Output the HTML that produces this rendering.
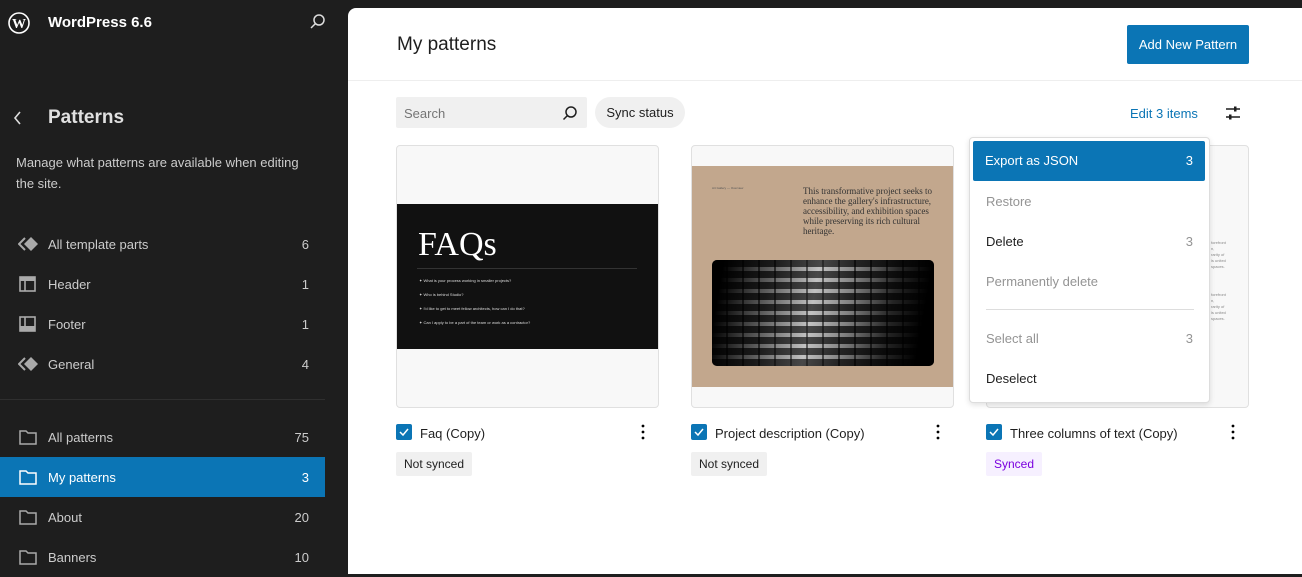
<!DOCTYPE html>
<html><head><meta charset="utf-8"><style>
*{box-sizing:border-box;margin:0;padding:0}
body{width:1302px;height:574px;overflow:hidden;background:#1e1e1e;font-family:"Liberation Sans",sans-serif;position:relative}
.abs{position:absolute}
.sb{color:#ccc;font-size:13px}
.item{position:absolute;left:0;width:325px;height:40px;display:flex;align-items:center;padding-left:18px;color:#ccc;font-size:13px}
.item .ic{width:20px;height:20px;margin-right:10px;display:flex;align-items:center;justify-content:center}
.item .n{position:absolute;right:16px}
.main{position:absolute;left:348px;top:8px;width:954px;height:566px;background:#fff;border-top-left-radius:8px}
.card{position:absolute;top:137px;width:263px;height:263px;border:1px solid #e0e0e0;border-radius:4px;background:#f8f8f8;overflow:hidden}
.cb{position:absolute;top:416px;width:16px;height:16px;background:#0b75b5;border-radius:2px}
.title{position:absolute;top:418px;font-size:13px;color:#1e1e1e}
.dots{position:absolute;top:415px;width:4px;font-size:16px;color:#1e1e1e}
.badge{position:absolute;top:444px;height:24px;padding:0 8px;line-height:24px;font-size:12px;border-radius:2px}
.mi{position:absolute;left:16px;right:4px;height:40px;display:flex;align-items:center;font-size:13px;color:#1e1e1e}
.mi .n{position:absolute;right:12px}
.dis{color:#949494}
</style></head><body>
<svg class="abs" style="left:8px;top:12px" width="22" height="22" viewBox="0 0 22 22"><circle cx="11" cy="11" r="10" fill="none" stroke="#fff" stroke-width="1.6"/><text x="11" y="16" font-size="14" font-family="Liberation Serif" font-weight="bold" fill="#fff" text-anchor="middle">W</text></svg>
<div class="abs" style="left:48px;top:14px;color:#fff;font-size:15px;font-weight:bold">WordPress 6.6</div>
<svg class="abs" style="left:309px;top:13px" width="18" height="18" viewBox="0 0 18 18"><circle cx="10" cy="7" r="5" fill="none" stroke="#ddd" stroke-width="1.5"/><path d="M6.5 10.5L2 15" stroke="#ddd" stroke-width="1.5"/></svg>
<svg class="abs" style="left:12px;top:110px" width="12" height="16" viewBox="0 0 12 16"><path d="M8 2L3 8l5 6" fill="none" stroke="#ddd" stroke-width="1.6"/></svg>
<div class="abs" style="left:48px;top:107px;color:#e0e0e0;font-size:19px;font-weight:bold">Patterns</div>
<div class="abs sb" style="left:16px;top:152px;width:300px;line-height:21px">Manage what patterns are available when editing the site.</div>
<div class="item" style="top:224px"><span class="ic"><svg width="22" height="16"><path d="M7 2L1 8l6 6" fill="none" stroke="#aaa" stroke-width="2"/><path d="M13 1l7 7-7 7-7-7z" fill="#aaa"/></svg></span>All template parts<span class="n">6</span></div>
<div class="item" style="top:264px"><span class="ic"><svg width="18" height="16"><rect x="1" y="1" width="15" height="14" fill="none" stroke="#aaa" stroke-width="1.6"/><rect x="1" y="1" width="15" height="4" fill="#aaa"/><path d="M6 5v10" stroke="#aaa" stroke-width="1.6"/></svg></span>Header<span class="n">1</span></div>
<div class="item" style="top:304px"><span class="ic"><svg width="18" height="16"><rect x="1" y="1" width="15" height="14" fill="none" stroke="#aaa" stroke-width="1.6"/><rect x="1" y="10" width="15" height="5" fill="#aaa"/><path d="M6 1v10" stroke="#aaa" stroke-width="1.6"/></svg></span>Footer<span class="n">1</span></div>
<div class="item" style="top:344px"><span class="ic"><svg width="22" height="16"><path d="M7 2L1 8l6 6" fill="none" stroke="#aaa" stroke-width="2"/><path d="M13 1l7 7-7 7-7-7z" fill="#aaa"/></svg></span>General<span class="n">4</span></div>
<div class="abs" style="left:0;top:399px;width:325px;height:1px;background:#2f2f2f"></div>
<div class="item" style="top:417px"><span class="ic"><svg width="18" height="16"><path d="M1 2h6l2 2h8v11H1z" fill="none" stroke="#aaa" stroke-width="1.5"/></svg></span>All patterns<span class="n">75</span></div>
<div class="item" style="top:457px;background:#0b75b5;color:#fff"><span class="ic"><svg width="18" height="16"><path d="M1 2h6l2 2h8v11H1z" fill="none" stroke="#fff" stroke-width="1.5"/></svg></span>My patterns<span class="n">3</span></div>
<div class="item" style="top:497px"><span class="ic"><svg width="18" height="16"><path d="M1 2h6l2 2h8v11H1z" fill="none" stroke="#aaa" stroke-width="1.5"/></svg></span>About<span class="n">20</span></div>
<div class="item" style="top:537px"><span class="ic"><svg width="18" height="16"><path d="M1 2h6l2 2h8v11H1z" fill="none" stroke="#aaa" stroke-width="1.5"/></svg></span>Banners<span class="n">10</span></div>

<div class="main">
<div class="abs" style="left:49px;top:26px;font-size:19px;color:#1e1e1e">My patterns</div>
<div class="abs" style="left:779px;top:17px;width:122px;height:39px;background:#0b75b5;color:#fff;font-size:13px;line-height:39px;text-align:center;border-radius:2px">Add New Pattern</div>
<div class="abs" style="left:0;top:72px;width:954px;height:1px;background:#eee"></div>
<div class="abs" style="left:48px;top:89px;width:191px;height:31px;background:#f0f0f0;border-radius:2px;font-size:13px;color:#757575;padding:9px 8px">Search</div>
<svg class="abs" style="left:214px;top:97px" width="16" height="16"><circle cx="9" cy="7" r="5" fill="none" stroke="#1e1e1e" stroke-width="1.5"/><path d="M5.5 10.5L1.5 14.5" stroke="#1e1e1e" stroke-width="1.5"/></svg>
<div class="abs" style="left:247px;top:89px;width:90px;height:31px;background:#f0f0f0;border-radius:16px;font-size:13px;color:#1e1e1e;line-height:31px;text-align:center">Sync status</div>
<div class="abs" style="left:782px;top:98px;font-size:13px;color:#0b75b5">Edit 3 items</div>
<svg class="abs" style="left:877px;top:97px" width="16" height="16"><path d="M1 4h14M1 12h14" stroke="#1e1e1e" stroke-width="1.5"/><rect x="9" y="1.5" width="2.5" height="5" fill="#1e1e1e"/><rect x="4" y="9.5" width="2.5" height="5" fill="#1e1e1e"/></svg>

<div class="card" style="left:48px">
<div class="abs" style="left:0;top:58px;width:263px;height:145px;background:#111">
<div class="abs" style="left:21px;top:22px;font-family:'Liberation Serif',serif;font-size:34px;color:#fff">FAQs</div>
<div class="abs" style="left:20px;top:64px;width:220px;height:1px;background:#333"></div>
<div class="abs" style="left:22px;top:70px;font-size:4px;color:#ddd;line-height:14px">✦ What is your process working in smaller projects?<br>✦ Who is behind Studio?<br>✦ I'd like to get to meet fellow architects, how can I do that?<br>✦ Can I apply to be a part of the team or work as a contractor?</div>
</div></div>
<div class="card" style="left:343px">
<div class="abs" style="left:0;top:20px;width:263px;height:221px;background:#c2a78d">
<div class="abs" style="left:20px;top:20px;font-size:3px;color:#555">Art Gallery — Overview</div>
<div class="abs" style="left:111px;top:20px;width:135px;font-family:'Liberation Serif',serif;font-size:9px;line-height:10px;color:#333">This transformative project seeks to enhance the gallery's infrastructure, accessibility, and exhibition spaces while preserving its rich cultural heritage.</div>
<div class="abs" style="left:20px;top:94px;width:222px;height:106px;border-radius:5px;background:repeating-linear-gradient(90deg,transparent 0 14px,rgba(0,0,0,.6) 14px 16px),repeating-linear-gradient(0deg,#333 0 7px,#bbb 7px 11px);overflow:hidden"><div style="width:100%;height:100%;background:linear-gradient(100deg,#000 5%,rgba(0,0,0,.5) 25%,rgba(255,255,255,.1) 45%,rgba(0,0,0,.3) 60%,rgba(0,0,0,.8) 78%,#000 92%)"></div></div>
</div></div>
<div class="card" style="left:638px">
<div class="abs" style="left:224px;top:94px;font-size:4px;line-height:6px;color:#888">forefront<br>n,<br>rarity of<br>ls united<br>spaces.</div>
<div class="abs" style="left:224px;top:146px;font-size:4px;line-height:6px;color:#888">forefront<br>n,<br>rarity of<br>ls united<br>spaces.</div>
</div>

<div class="cb" style="left:48px"><svg width="16" height="16"><path d="M4 8l3 3 5-6" fill="none" stroke="#fff" stroke-width="1.5"/></svg></div>
<div class="title" style="left:72px">Faq (Copy)</div>
<div class="dots" style="left:293px"><svg width="4" height="18"><circle cx="2" cy="3" r="1.4"/><circle cx="2" cy="9" r="1.4"/><circle cx="2" cy="15" r="1.4"/></svg></div>
<div class="badge" style="left:48px;background:#f0f0f0;color:#1e1e1e">Not synced</div>
<div class="cb" style="left:343px"><svg width="16" height="16"><path d="M4 8l3 3 5-6" fill="none" stroke="#fff" stroke-width="1.5"/></svg></div>
<div class="title" style="left:367px">Project description (Copy)</div>
<div class="dots" style="left:588px"><svg width="4" height="18"><circle cx="2" cy="3" r="1.4"/><circle cx="2" cy="9" r="1.4"/><circle cx="2" cy="15" r="1.4"/></svg></div>
<div class="badge" style="left:343px;background:#f0f0f0;color:#1e1e1e">Not synced</div>
<div class="cb" style="left:638px"><svg width="16" height="16"><path d="M4 8l3 3 5-6" fill="none" stroke="#fff" stroke-width="1.5"/></svg></div>
<div class="title" style="left:662px">Three columns of text (Copy)</div>
<div class="dots" style="left:883px"><svg width="4" height="18"><circle cx="2" cy="3" r="1.4"/><circle cx="2" cy="9" r="1.4"/><circle cx="2" cy="15" r="1.4"/></svg></div>
<div class="badge" style="left:638px;background:#f6f0ff;color:#7a00df">Synced</div>

<div class="abs" style="left:621px;top:129px;width:241px;height:266px;background:#fff;border:1px solid #ddd;border-radius:4px;box-shadow:0 2px 6px rgba(0,0,0,.12)">
<div class="abs" style="left:3px;top:3px;width:232px;height:40px;background:#0b75b5;border-radius:2px;color:#fff;font-size:13px;padding:0 12px;line-height:40px">Export as JSON<span style="position:absolute;right:12px">3</span></div>
<div class="mi dis" style="top:43px">Restore</div>
<div class="mi" style="top:83px">Delete<span class="n dis">3</span></div>
<div class="mi dis" style="top:123px">Permanently delete</div>
<div class="abs" style="left:16px;top:171px;width:208px;height:1px;background:#ddd"></div>
<div class="mi dis" style="top:180px">Select all<span class="n">3</span></div>
<div class="mi" style="top:220px">Deselect</div>
</div>
</div>
</body></html>
